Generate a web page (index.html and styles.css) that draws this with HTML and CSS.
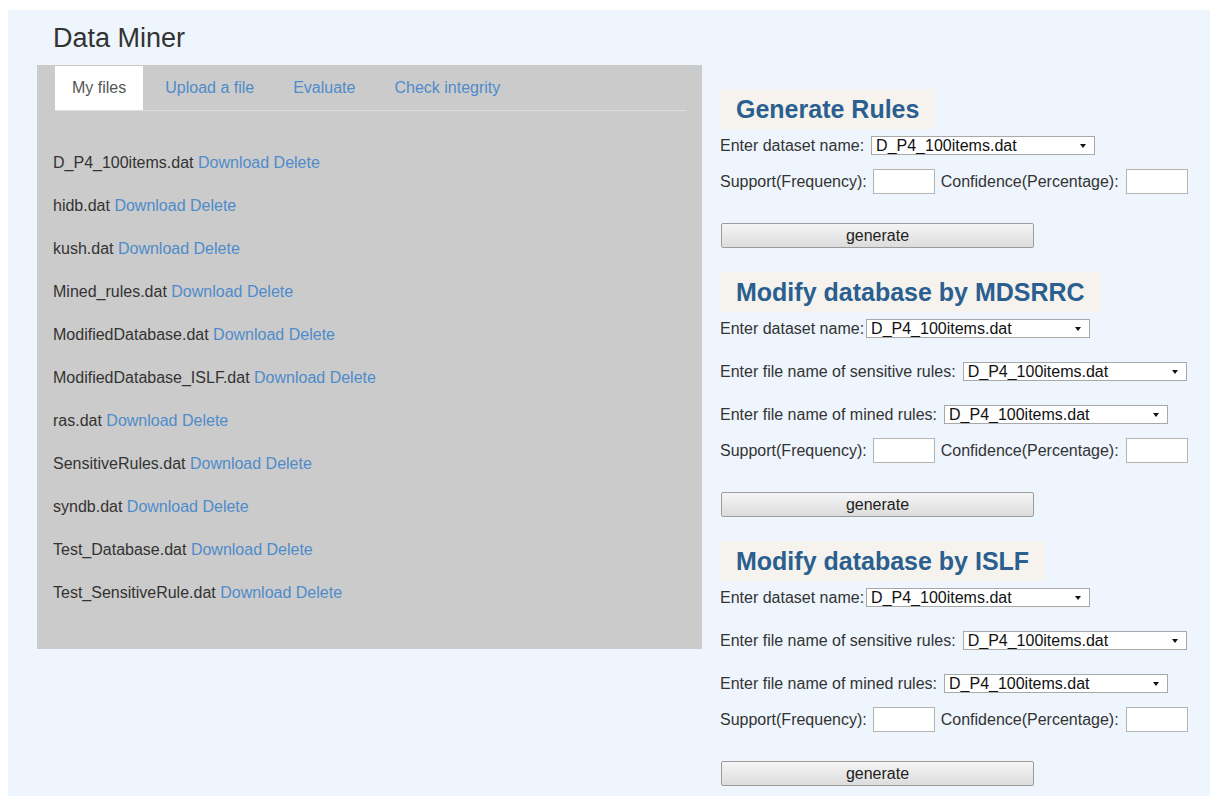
FILE: index.html
```html
<!DOCTYPE html>
<html lang="en">
<head>
<meta charset="utf-8">
<title>Data Miner</title>
<link rel="stylesheet" href="styles.css">
</head>
<body>
<div class="page">
  <h1 class="brand">Data Miner</h1>
  <div class="layout">
    <section class="files">
      <ul class="tabs">
        <li class="tab active"><a href="#">My files</a></li>
        <li class="tab"><a href="#">Upload a file</a></li>
        <li class="tab"><a href="#">Evaluate</a></li>
        <li class="tab"><a href="#">Check integrity</a></li>
      </ul>
      <ul class="file-list">
        <li>D_P4_100items.dat <a href="#">Download</a> <a href="#">Delete</a></li>
        <li>hidb.dat <a href="#">Download</a> <a href="#">Delete</a></li>
        <li>kush.dat <a href="#">Download</a> <a href="#">Delete</a></li>
        <li>Mined_rules.dat <a href="#">Download</a> <a href="#">Delete</a></li>
        <li>ModifiedDatabase.dat <a href="#">Download</a> <a href="#">Delete</a></li>
        <li>ModifiedDatabase_ISLF.dat <a href="#">Download</a> <a href="#">Delete</a></li>
        <li>ras.dat <a href="#">Download</a> <a href="#">Delete</a></li>
        <li>SensitiveRules.dat <a href="#">Download</a> <a href="#">Delete</a></li>
        <li>syndb.dat <a href="#">Download</a> <a href="#">Delete</a></li>
        <li>Test_Database.dat <a href="#">Download</a> <a href="#">Delete</a></li>
        <li>Test_SensitiveRule.dat <a href="#">Download</a> <a href="#">Delete</a></li>
      </ul>
    </section>

    <div class="tools">
      <form class="tool">
        <h2>Generate Rules</h2>
        <div class="row">
          <label for="g-data">Enter dataset name:</label>
          <span class="pick"><select id="g-data"><option>D_P4_100items.dat</option></select></span>
        </div>
        <div class="row nums">
          <label for="g-sup">Support(Frequency):</label>
          <input class="num" id="g-sup" type="text">
          <label class="after" for="g-conf">Confidence(Percentage):</label>
          <input class="num wide" id="g-conf" type="text">
        </div>
        <button class="go" type="button">generate</button>
      </form>

      <form class="tool">
        <h2>Modify database by MDSRRC</h2>
        <div class="row">
          <label for="m-data">Enter dataset name:</label>
          <span class="pick tight"><select id="m-data"><option>D_P4_100items.dat</option></select></span>
        </div>
        <div class="row">
          <label for="m-sens">Enter file name of sensitive rules:</label>
          <span class="pick"><select id="m-sens"><option>D_P4_100items.dat</option></select></span>
        </div>
        <div class="row">
          <label for="m-mined">Enter file name of mined rules:</label>
          <span class="pick"><select id="m-mined"><option>D_P4_100items.dat</option></select></span>
        </div>
        <div class="row nums">
          <label for="m-sup">Support(Frequency):</label>
          <input class="num" id="m-sup" type="text">
          <label class="after" for="m-conf">Confidence(Percentage):</label>
          <input class="num wide" id="m-conf" type="text">
        </div>
        <button class="go" type="button">generate</button>
      </form>

      <form class="tool">
        <h2>Modify database by ISLF</h2>
        <div class="row">
          <label for="i-data">Enter dataset name:</label>
          <span class="pick tight"><select id="i-data"><option>D_P4_100items.dat</option></select></span>
        </div>
        <div class="row">
          <label for="i-sens">Enter file name of sensitive rules:</label>
          <span class="pick"><select id="i-sens"><option>D_P4_100items.dat</option></select></span>
        </div>
        <div class="row">
          <label for="i-mined">Enter file name of mined rules:</label>
          <span class="pick"><select id="i-mined"><option>D_P4_100items.dat</option></select></span>
        </div>
        <div class="row nums">
          <label for="i-sup">Support(Frequency):</label>
          <input class="num" id="i-sup" type="text">
          <label class="after" for="i-conf">Confidence(Percentage):</label>
          <input class="num wide" id="i-conf" type="text">
        </div>
        <button class="go" type="button">generate</button>
      </form>
    </div>
  </div>
</div>
</body>
</html>
```

FILE: styles.css
```css
html {
  background: #fff;
}

body {
  margin: 10px 0 0 8px;
  font-family: "Liberation Sans", Arial, sans-serif;
  font-size: 16px;
  color: #333;
  overflow: hidden;
}

a {
  color: #4f8bca;
  text-decoration: none;
}

/* light blue page area */
.page {
  background: #eef5fd;
  height: 786px;
  padding-left: 29px;
  box-sizing: border-box;
}

.brand {
  margin: 0 0 11px;
  padding: 13px 0 0 16px;
  font-size: 27px;
  line-height: 31px;
  font-weight: normal;
  color: #333;
}

.layout {
  display: flex;
  align-items: flex-start;
}

/* grey file manager panel */
.files {
  width: 665px;
  height: 584px;
  padding-top: 1px;
  box-sizing: border-box;
  background: #cbcbcb;
}

.tabs {
  display: flex;
  list-style: none;
  margin: 0 16px 0 18px;
  padding: 0;
  border-bottom: 1px solid #dedede;
}

.tab a {
  display: block;
  margin-right: 5px;
  padding: 11px 17px;
  line-height: 22px;
}

.tab.active a {
  background: #fff;
  color: #555;
}

.file-list {
  list-style: none;
  margin: 0;
  padding: 30px 0 0 16px;
}

.file-list li {
  line-height: 43px;
  white-space: nowrap;
}

/* right column forms */
.tools {
  margin-left: 18px;
  padding-top: 24px;
}

.tool {
  margin: 0;
}

.tool + .tool {
  margin-top: 24px;
}

.tool h2 {
  width: fit-content;
  height: 40px;
  margin: 0;
  padding: 0 16px;
  line-height: 40px;
  font-size: 25px;
  font-weight: bold;
  color: #2a5f8f;
  background: #f6f3ee;
}

.row {
  display: flex;
  align-items: center;
  height: 25px;
  margin-top: 18px;
  white-space: nowrap;
}

.tool h2 + .row {
  margin-top: 4px;
}

.row.nums {
  margin-top: 11px;
}

.pick {
  position: relative;
  display: block;
  margin-left: 7px;
}

.pick.tight {
  margin-left: 2px;
}

.pick select {
  -webkit-appearance: none;
  appearance: none;
  display: block;
  width: 224px;
  height: 19px;
  margin: 0;
  padding: 0 0 0 4px;
  border: 1px solid #a8a8a8;
  border-radius: 0;
  background: #fff;
  font: 16px "Liberation Sans", Arial, sans-serif;
  line-height: 17px;
  color: #111;
}

/* dropdown arrow */
.pick::after {
  content: "";
  position: absolute;
  right: 9px;
  top: 8px;
  border-left: 3px solid transparent;
  border-right: 3px solid transparent;
  border-top: 4px solid #111;
  pointer-events: none;
}

.num {
  width: 62px;
  height: 25px;
  box-sizing: border-box;
  margin: 0 0 0 6px;
  padding: 0 3px;
  border: 1px solid #b4b4b4;
  background: #fff;
  font: 16px "Liberation Sans", Arial, sans-serif;
}

.num.wide {
  margin-left: 7px;
}

.after {
  margin-left: 6px;
}

.go {
  display: block;
  width: 313px;
  height: 25px;
  margin: 29px 0 0 1px;
  padding: 0;
  border: 1px solid #9c9c9c;
  border-radius: 2px;
  background: linear-gradient(#f5f5f5, #dcdcdc);
  font: 16px "Liberation Sans", Arial, sans-serif;
  color: #222;
}
```
